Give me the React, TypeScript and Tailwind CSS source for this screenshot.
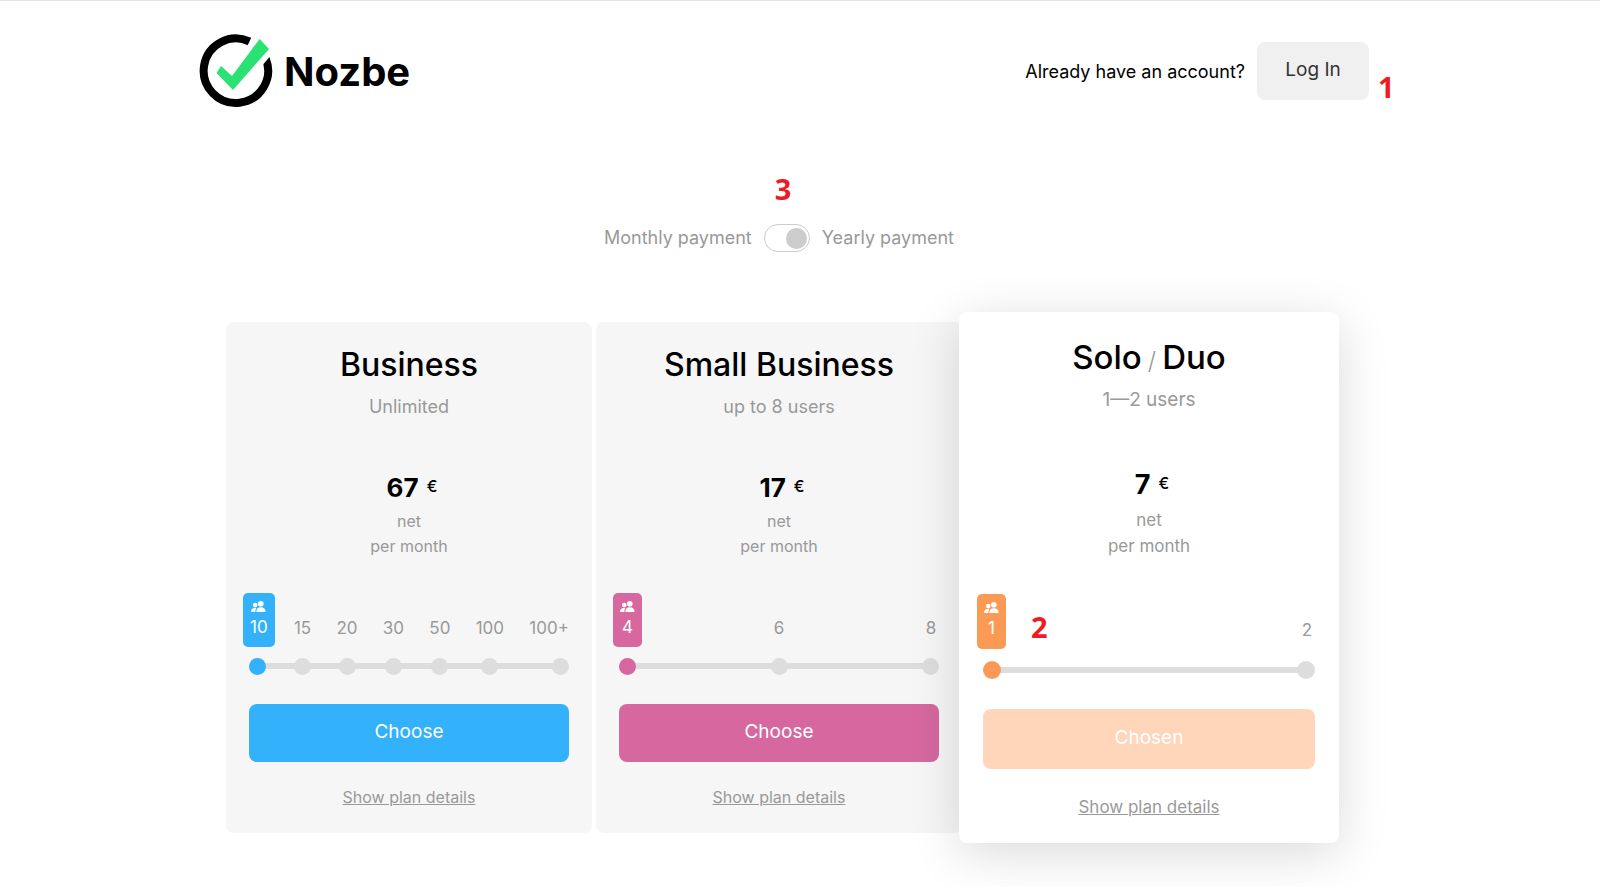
import React, { useState } from 'react';
import { clsx } from 'clsx';

interface Plan {
  id: string;
  title: React.ReactNode;
  users: string;
  price: number;
  stops: string[];
  badge: string;
  dot: string;
  button: string;
  featured?: boolean;
}

const plans: Plan[] = [
  {
    id: 'business',
    title: 'Business',
    users: 'Unlimited',
    price: 67,
    stops: ['10', '15', '20', '30', '50', '100', '100+'],
    badge: 'bg-[#33b1fb]',
    dot: 'checked:bg-[#33b1fb]',
    button: 'bg-[#33b1fb]',
  },
  {
    id: 'small-business',
    title: 'Small Business',
    users: 'up to 8 users',
    price: 17,
    stops: ['4', '6', '8'],
    badge: 'bg-[#d6689f]',
    dot: 'checked:bg-[#d6689f]',
    button: 'bg-[#d6689f]',
  },
  {
    id: 'solo-duo',
    title: (
      <>
        Solo<span className="mx-1.5 text-2xl font-light text-[#999]">/</span>Duo
      </>
    ),
    users: '1—2 users',
    price: 7,
    stops: ['1', '2'],
    badge: 'bg-[#fb9a55]',
    dot: 'checked:bg-[#fb9a55]',
    button: 'bg-[#ffd6ba]',
    featured: true,
  },
];

const Logo: React.FC = () => (
  <a href="#" className="flex items-center gap-[11px]">
    <svg width="74" height="74" viewBox="0 0 74 74" aria-hidden="true">
      <path d="M50.5 7.500A32.200 32.200 0 1 0 66.700 24.500" fill="none" stroke="#000" strokeWidth="8" />
      <path d="M46 14 60 -2 78 14 62 33Z" fill="#fff" />
      <path d="M60.500 5 70 15 34 56 17.500 39 22 32 33 42Z" fill="#2ae174" />
    </svg>
    <span className="pt-0.5 text-[40px] leading-[48px] font-bold">Nozbe</span>
  </a>
);

const UsersIcon: React.FC = () => (
  <svg width="15" height="11" viewBox="0 0 15 11" fill="currentColor" aria-hidden="true">
    <circle cx="9.8" cy="2.8" r="2.8" />
    <path d="M5.3 11C5.3 8 7 6.3 9.9 6.3S14.6 8 14.6 11Z" />
    <circle cx="4.2" cy="4.1" r="2.3" />
    <path d="M0 11C0 8.4 1.4 7 3.9 7c.7 0 1.2.1 1.6.3C4.6 8.4 4.3 9.5 4.3 11Z" />
  </svg>
);

const Marker: React.FC<{ className: string; children: string }> = ({ className, children }) => (
  <span
    className={clsx(
      "absolute font-['Noto_Sans',sans-serif] text-[29px] leading-8 font-bold text-[#ed1c24]",
      className
    )}
  >
    {children}
  </span>
);

const UserSlider: React.FC<{ plan: Plan }> = ({ plan }) => {
  const [selected, setSelected] = useState(plan.stops[0]);
  const big = plan.featured;

  return (
    <fieldset className="relative" aria-label="Number of users">
      <div className="absolute inset-x-2 bottom-1.5 h-1.5 bg-[#ddd]" />
      <div className="relative flex items-end justify-between">
        {plan.stops.map((stop, index) => (
          <label
            key={stop}
            className={clsx(
              'flex flex-col text-[17px] leading-5 text-[#999]',
              big ? 'gap-3' : 'gap-[11px]',
              index === 0 && 'items-start',
              index === plan.stops.length - 1 && 'items-end',
              index > 0 && index < plan.stops.length - 1 && 'items-center'
            )}
          >
            {stop === selected ? (
              <span
                className={clsx(
                  '-mx-1.5 flex flex-col items-center gap-[5px] rounded-[5px] px-[7px] pt-2 text-white',
                  big ? 'h-[55px]' : 'h-[54px]',
                  plan.badge
                )}
              >
                <UsersIcon />
                {stop}
              </span>
            ) : (
              <span className="min-w-4 pb-[9px] text-center">{stop}</span>
            )}
            <input
              type="radio"
              name={plan.id}
              checked={stop === selected}
              onChange={() => setSelected(stop)}
              className={clsx(
                'appearance-none rounded-full bg-[#ddd]',
                big ? 'size-[18px]' : 'size-[17px]',
                plan.dot
              )}
            />
          </label>
        ))}
      </div>
      {big && <Marker className="top-[17px] left-12">2</Marker>}
    </fieldset>
  );
};

const PlanCard: React.FC<{ plan: Plan }> = ({ plan }) => {
  const big = plan.featured;

  return (
    <section
      className={clsx(
        'rounded-lg pb-6 text-center',
        big
          ? 'relative -mx-[7px] bg-white px-6 pt-[25px] shadow-[0_10px_50px_rgba(0,0,0,0.15)]'
          : 'bg-[#f6f6f6] px-[23px] pt-[23px]'
      )}
    >
      <h2 className={clsx('leading-10 font-medium', big ? 'text-[33px]' : 'text-[32px]')}>
        {plan.title}
      </h2>
      <p className={clsx('leading-6 text-[#999]', big ? 'mt-[11px] text-[19px]' : 'mt-2.5 text-lg')}>
        {plan.users}
      </p>
      <p
        className={clsx(
          'flex items-start justify-center gap-2 pl-1.5 leading-8 font-bold',
          big ? 'mt-[57px] text-[27px]' : 'mt-[53px] text-[26px]'
        )}
      >
        {plan.price}
        <span className="text-base leading-7 font-medium">€</span>
      </p>
      <p
        className={clsx(
          'text-[#999]',
          big ? 'mt-1.5 mb-[35px] text-[17px] leading-[26px]' : 'mt-[5px] mb-[34px] text-base leading-[25px]'
        )}
      >
        net
        <br />
        per month
      </p>
      <UserSlider plan={plan} />
      <button
        type="button"
        className={clsx(
          'w-full rounded-lg pb-0.5 text-[19px] text-white',
          big ? 'mt-[30px] h-[60px]' : 'mt-[29px] h-[58px]',
          plan.button
        )}
      >
        {big ? 'Chosen' : 'Choose'}
      </button>
      <a
        href="#"
        className={clsx(
          'inline-block leading-6 text-[#999] underline',
          big ? 'mt-[26px] text-[17px]' : 'mt-[23px] text-base'
        )}
      >
        Show plan details
      </a>
    </section>
  );
};

const App: React.FC = () => {
  const [yearly, setYearly] = useState(true);

  return (
    <div className="border-t border-[#e5e5e5] bg-white pr-8 pb-11 font-['Inter',sans-serif] text-black">
      <div className="mx-auto max-w-[1170px] pt-[33px]">
        <header className="flex items-center justify-between">
          <Logo />
          <div className="relative flex items-center gap-3">
            <span className="pt-0.5 text-lg">Already have an account?</span>
            <button
              type="button"
              className="h-[58px] w-28 rounded-lg bg-[#f0f0f0] pb-0.5 text-[19px] text-[#333]"
            >
              Log In
            </button>
            <Marker className="top-[29px] left-full ml-[9px]">1</Marker>
          </div>
        </header>

        <main className="pr-[37px] pl-[27px]">
          <div className="mt-[116px] flex items-center justify-center gap-3 text-lg text-[#999]">
            <span>Monthly payment</span>
            <span className="relative flex">
              <input
                type="checkbox"
                role="switch"
                aria-label="Yearly payment"
                checked={yearly}
                onChange={() => setYearly(!yearly)}
                className="flex h-7 w-[46px] appearance-none items-center rounded-full border border-[#ccc] px-0.5 before:size-[21px] before:rounded-full before:bg-[#ccc] checked:justify-end"
              />
              <Marker className="bottom-full left-[11px] mb-[19px]">3</Marker>
            </span>
            <span>Yearly payment</span>
          </div>

          <div className="mt-[60px] grid grid-cols-3 items-center gap-1">
            {plans.map((plan) => (
              <PlanCard key={plan.id} plan={plan} />
            ))}
          </div>
        </main>
      </div>
    </div>
  );
};

export default App;
